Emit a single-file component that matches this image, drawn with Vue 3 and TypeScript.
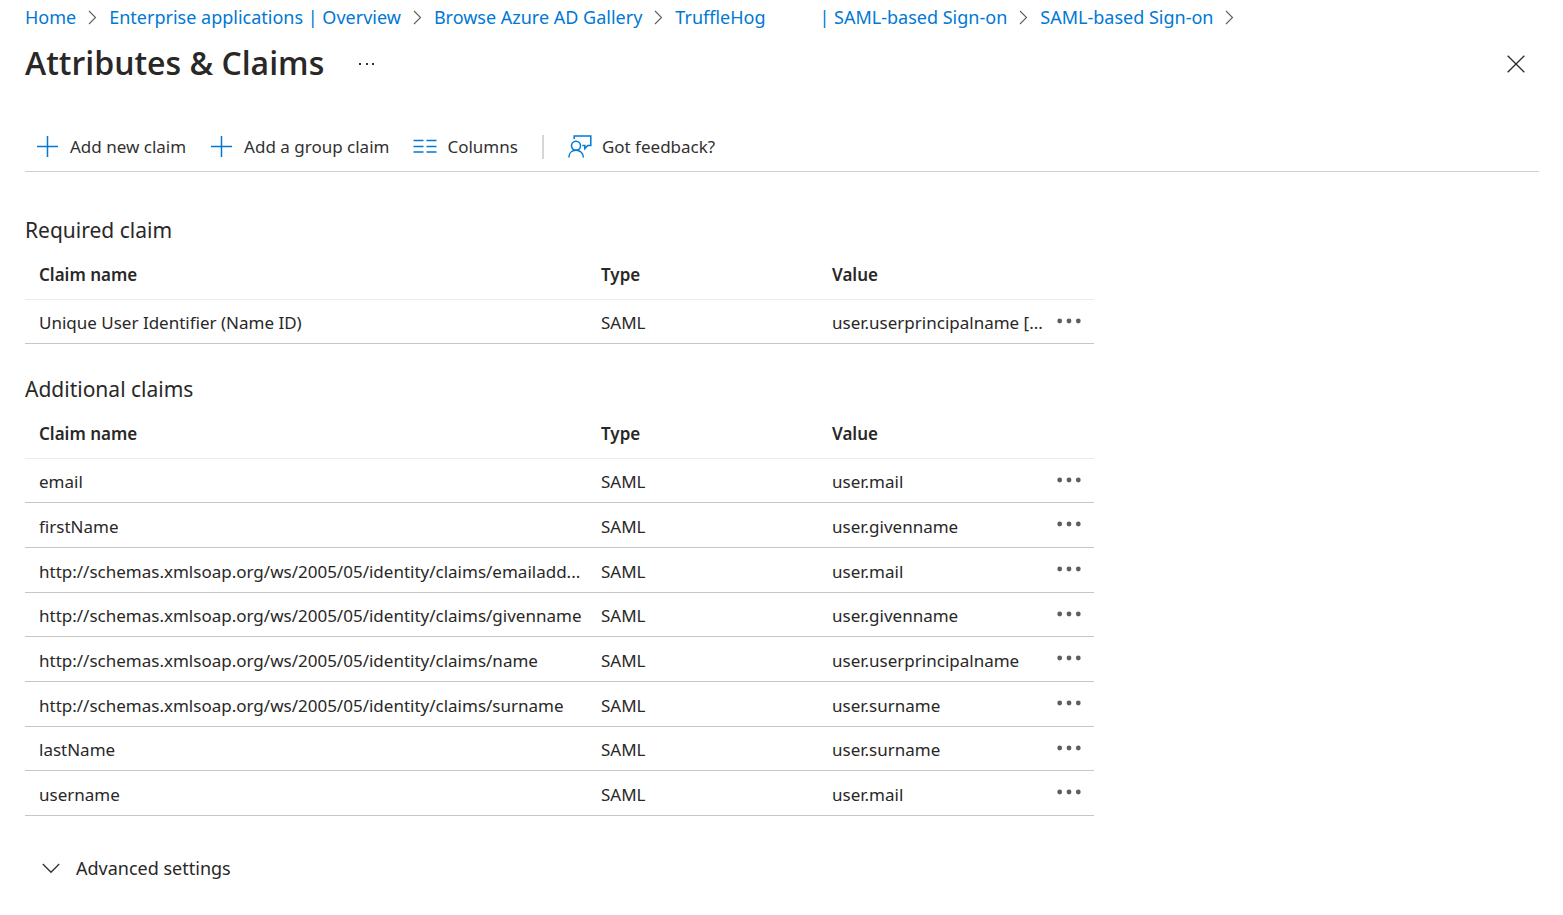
<script setup lang="ts">
import { ref } from 'vue'

interface Claim {
  name: string
  type: string
  value: string
}

interface ClaimGroup {
  id: string
  title: string
  claims: Claim[]
}

const crumbs: string[][] = [
  ['Home'],
  ['Enterprise applications | Overview'],
  ['Browse Azure AD Gallery'],
  ['TruffleHog', '| SAML-based Sign-on'],
  ['SAML-based Sign-on'],
]

const schema = 'http://schemas.xmlsoap.org/ws/2005/05/identity/claims/'

const groups: ClaimGroup[] = [
  {
    id: 'required',
    title: 'Required claim',
    claims: [
      {
        name: 'Unique User Identifier (Name ID)',
        type: 'SAML',
        value: 'user.userprincipalname [...',
      },
    ],
  },
  {
    id: 'additional',
    title: 'Additional claims',
    claims: [
      { name: 'email', type: 'SAML', value: 'user.mail' },
      { name: 'firstName', type: 'SAML', value: 'user.givenname' },
      { name: schema + 'emailadd...', type: 'SAML', value: 'user.mail' },
      { name: schema + 'givenname', type: 'SAML', value: 'user.givenname' },
      { name: schema + 'name', type: 'SAML', value: 'user.userprincipalname' },
      { name: schema + 'surname', type: 'SAML', value: 'user.surname' },
      { name: 'lastName', type: 'SAML', value: 'user.surname' },
      { name: 'username', type: 'SAML', value: 'user.mail' },
    ],
  },
]

const advancedOpen = ref(false)
</script>

<template>
  <div class="page">
    <nav class="crumbs" aria-label="Breadcrumb">
      <template v-for="(parts, i) in crumbs" :key="i">
        <a href="#" class="crumb"><span v-for="part in parts" :key="part">{{ part }}</span></a>
        <svg class="sep" width="9" height="15" viewBox="0 0 9 15" aria-hidden="true">
          <path d="M1 1 L7.5 7.5 L1 14" fill="none" stroke="#605e5c" stroke-width="1.1" />
        </svg>
      </template>
    </nav>

    <header class="head">
      <h1>Attributes &amp; Claims</h1>
      <button type="button" class="icon-btn" aria-label="More options">
        <svg width="18" height="4" viewBox="0 0 18 4" fill="#323130" aria-hidden="true">
          <rect x="1" y="1" width="2" height="2" />
          <rect x="8" y="1" width="2" height="2" />
          <rect x="14" y="1" width="2" height="2" />
        </svg>
      </button>
      <button type="button" class="icon-btn close" aria-label="Close">
        <svg width="18" height="18" viewBox="0 0 18 18" aria-hidden="true">
          <path d="M0.7 0.7 L17.3 17.3 M17.3 0.7 L0.7 17.3" stroke="#292827" stroke-width="1.3" />
        </svg>
      </button>
    </header>

    <div class="toolbar" role="toolbar" aria-label="Claim commands">
      <button type="button" class="cmd">
        <svg width="24" height="24" viewBox="0 0 24 24" aria-hidden="true">
          <path d="M11.5 1 V22 M1 11.5 H22" stroke="#0078d4" stroke-width="1.5" />
        </svg>
        Add new claim
      </button>
      <button type="button" class="cmd">
        <svg width="24" height="24" viewBox="0 0 24 24" aria-hidden="true">
          <path d="M11.5 1 V22 M1 11.5 H22" stroke="#0078d4" stroke-width="1.5" />
        </svg>
        Add a group claim
      </button>
      <button type="button" class="cmd">
        <svg width="24" height="24" viewBox="0 0 24 24" aria-hidden="true">
          <path
            d="M0.5 5.5 H10.5 M13.5 5.5 H23.5 M0.5 11.5 H10.5 M13.5 11.5 H23.5 M0.5 17 H10.5 M13.5 17 H23.5"
            stroke="#0078d4"
            stroke-width="1.4"
          />
        </svg>
        Columns
      </button>
      <span class="divider"></span>
      <button type="button" class="cmd">
        <svg width="24" height="24" viewBox="0 0 24 24" fill="none" stroke="#0078d4" stroke-width="1.5" aria-hidden="true">
          <circle cx="8" cy="10.8" r="4.5" />
          <path d="M0.9 22.4 C0.9 18 4 15.3 8 15.3 C12 15.3 15.4 18 15.4 22.4" />
          <path d="M6.2 4 V0.9 H22.8 V10.5 H19.8 L16.8 13.6 V10.5 H14.4" />
        </svg>
        Got feedback?
      </button>
    </div>

    <main>
      <section v-for="group in groups" :key="group.id" class="group">
        <h2 :id="group.id">{{ group.title }}</h2>
        <table :aria-labelledby="group.id">
          <colgroup>
            <col />
            <col class="col-type" />
            <col class="col-value" />
            <col class="col-menu" />
          </colgroup>
          <thead>
            <tr>
              <th scope="col">Claim name</th>
              <th scope="col">Type</th>
              <th scope="col">Value</th>
              <td></td>
            </tr>
          </thead>
          <tbody>
            <tr v-for="claim in group.claims" :key="claim.name">
              <td>{{ claim.name }}</td>
              <td>{{ claim.type }}</td>
              <td>{{ claim.value }}</td>
              <td class="menu-cell">
                <button type="button" class="icon-btn" :aria-label="'Actions for ' + claim.name">
                  <svg width="24" height="6" viewBox="0 0 24 6" fill="#605e5c" aria-hidden="true">
                    <circle cx="2.7" cy="3" r="2.4" />
                    <circle cx="12" cy="3" r="2.4" />
                    <circle cx="21.3" cy="3" r="2.4" />
                  </svg>
                </button>
              </td>
            </tr>
          </tbody>
        </table>
      </section>

      <button type="button" class="advanced" :aria-expanded="advancedOpen" @click="advancedOpen = !advancedOpen">
        <svg width="18" height="11" viewBox="0 0 18 11" aria-hidden="true">
          <path d="M0.8 1 L9 9.3 L17.2 1" fill="none" stroke="#323130" stroke-width="1.3" />
        </svg>
        Advanced settings
      </button>
    </main>
  </div>
</template>

<style>
body {
  margin: 0;
  background: #fff;
}
</style>

<style scoped>
.page {
  padding: 4px 24px 24px 25px;
  font-family: 'Segoe UI', 'Noto Sans', 'Open Sans', sans-serif;
  font-size: 17px;
  line-height: 24px;
  color: #292827;
}

button {
  margin: 0;
  padding: 0;
  border: 0;
  background: none;
  font: inherit;
  color: inherit;
  cursor: pointer;
}

svg {
  display: block;
  flex: none;
}

.crumbs {
  display: flex;
  align-items: center;
  gap: 12px;
  height: 26px;
  font-size: 18px;
  white-space: nowrap;
}

.crumb {
  display: flex;
  gap: 54px;
  color: #0078d4;
  text-decoration: none;
}

.head {
  display: flex;
  align-items: center;
  gap: 34px;
  height: 68px;
}

h1 {
  margin: 0;
  padding-bottom: 3px;
  font-family: 'Segoe UI', 'Open Sans', 'Noto Sans', sans-serif;
  font-size: 32px;
  line-height: 44px;
  font-weight: 600;
}

.icon-btn {
  display: inline-flex;
  align-items: center;
  justify-content: center;
}

.close {
  margin-left: auto;
  margin-right: 14px;
}

.toolbar {
  display: flex;
  align-items: center;
  gap: 24px;
  margin-top: 24px;
  padding: 0 11px;
  height: 49px;
  border-bottom: 1px solid #d2d0ce;
  color: #323130;
}

.cmd {
  display: flex;
  align-items: center;
  gap: 10px;
  white-space: nowrap;
}

.divider {
  width: 2px;
  height: 24px;
  background: #d6d6d6;
}

main {
  max-width: 1069px;
  padding-top: 42px;
}

.group {
  margin-bottom: 29px;
}

h2 {
  margin: 0;
  font-size: 21px;
  line-height: 32px;
  font-weight: 400;
}

table {
  width: 100%;
  table-layout: fixed;
  border-collapse: separate;
  border-spacing: 0;
}

.col-type {
  width: 231px;
}

.col-value {
  width: 226px;
}

.col-menu {
  width: 50px;
}

th,
td {
  box-sizing: border-box;
  height: 45px;
  padding: 3px 0 0 14px;
  border-bottom: 1px solid #c8c6c4;
  text-align: left;
  white-space: nowrap;
}

thead th,
thead td {
  height: 54px;
  padding-top: 5px;
  border-bottom-color: #edebe9;
  font-weight: 600;
}

tbody tr:nth-child(3n + 1) td {
  height: 44px;
}

.menu-cell {
  padding: 0 0 8px;
  text-align: center;
}

.advanced {
  display: flex;
  align-items: center;
  gap: 16px;
  margin: 40px 0 0 17px;
  font-size: 18px;
}
</style>
